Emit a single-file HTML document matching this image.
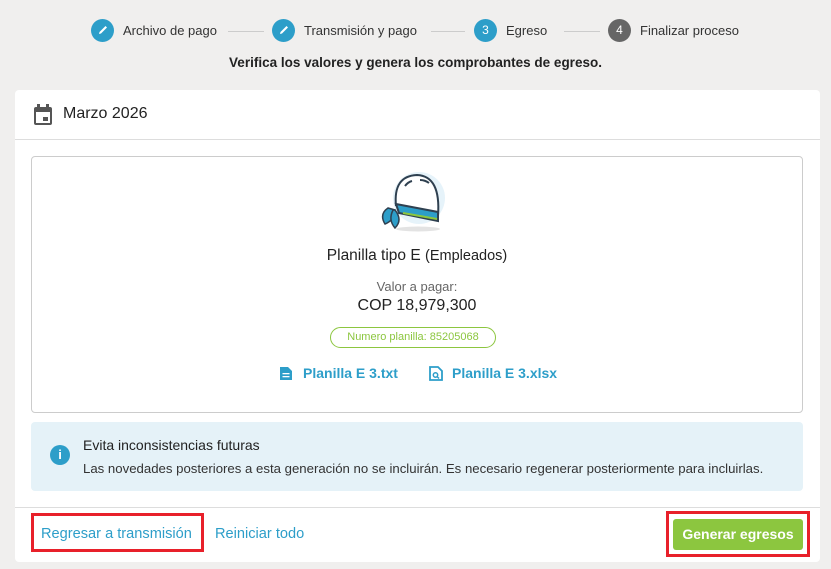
<!DOCTYPE html>
<html><head><meta charset="utf-8"><style>
*{box-sizing:border-box;margin:0;padding:0}
body{width:831px;height:569px;background:#f0efee;font-family:"Liberation Sans",sans-serif;position:relative;overflow:hidden;color:#222}
.a{position:absolute}
.step{position:absolute;top:19px;height:22px;display:flex;align-items:center;font-size:13px;color:#333;white-space:nowrap}
.c{width:23px;height:23px;border-radius:50%;color:#fff;font-size:12px;display:flex;align-items:center;justify-content:center;margin-right:9px}
.line{position:absolute;top:31px;height:1px;background:#ccc}
</style></head><body>
<div class="step" style="left:91px"><div class="c" style="background:#2d9ec9"><svg width="12" height="12" viewBox="0 0 12 12"><path d="M2 10 L2.5 8 L8.5 2 L10 3.5 L4 9.5 Z" fill="#fff"/></svg></div>Archivo de pago</div>
<div class="line" style="left:228px;width:36px"></div>
<div class="step" style="left:272px"><div class="c" style="background:#2d9ec9"><svg width="12" height="12" viewBox="0 0 12 12"><path d="M2 10 L2.5 8 L8.5 2 L10 3.5 L4 9.5 Z" fill="#fff"/></svg></div>Transmisión y pago</div>
<div class="line" style="left:431px;width:34px"></div>
<div class="step" style="left:474px"><div class="c" style="background:#2d9ec9">3</div>Egreso</div>
<div class="line" style="left:564px;width:36px"></div>
<div class="step" style="left:608px"><div class="c" style="background:#666">4</div>Finalizar proceso</div>
<div class="a" style="left:0;width:831px;top:55px;text-align:center;font-size:13.5px;font-weight:bold;color:#222">Verifica los valores y genera los comprobantes de egreso.</div>

<div class="a" style="left:15px;top:90px;width:805px;height:472px;background:#fff;border-radius:4px"></div>
<svg class="a" style="left:33px;top:104px" width="20" height="22" viewBox="0 0 20 22"><rect x="1" y="3" width="18" height="18" rx="2" fill="#555"/><rect x="3" y="8" width="14" height="11" fill="#fff"/><rect x="4" y="0" width="3" height="5" fill="#555"/><rect x="13" y="0" width="3" height="5" fill="#555"/><rect x="10" y="13" width="5" height="4" fill="#555"/></svg>
<div class="a" style="left:63px;top:105px;font-size:16px;color:#222">Marzo 2026</div>
<div class="a" style="left:15px;top:139px;width:805px;height:1px;background:#ddd"></div>

<div class="a" style="left:31px;top:156px;width:772px;height:257px;border:1px solid #ccc;border-radius:4px"></div>
<svg class="a" style="left:375px;top:170px" width="82" height="66" viewBox="0 0 82 66">
<ellipse cx="44" cy="28" rx="26" ry="26" fill="#e6f3fa"/>
<ellipse cx="43" cy="59" rx="22" ry="2.5" fill="#e3e3e3"/>
<path d="M21 36 Q18 6 42 5 Q66 6 63 46" fill="#fff" stroke="#2f4050" stroke-width="2"/>
<path d="M21 34 L63 42 L63 51 L24 43 Z" fill="#2d9ec9" stroke="#2f4050" stroke-width="2"/>
<path d="M28 43 L62 49" stroke="#8cc63f" stroke-width="2"/>
<path d="M13 38 Q4 44 10 54 Q20 50 20 40 Z" fill="#2d9ec9" stroke="#2f4050" stroke-width="1.5"/>
<path d="M20 40 Q28 50 20 58 Q13 50 18 40 Z" fill="#2d9ec9" stroke="#2f4050" stroke-width="1.5"/>
<path d="M30 16 Q33 12 37 11" stroke="#2f4050" stroke-width="2" fill="none"/>
<path d="M45 10 Q50 10 54 13" stroke="#2f4050" stroke-width="2" fill="none"/>
</svg>
<div class="a" style="left:0;width:834px;top:247px;text-align:center;font-size:15.5px;color:#222">Planilla tipo E <span style="font-size:14.5px">(Empleados)</span></div>
<div class="a" style="left:0;width:834px;top:279px;text-align:center;font-size:13px;color:#666">Valor a pagar:</div>
<div class="a" style="left:0;width:834px;top:297px;text-align:center;font-size:16px;color:#222">COP 18,979,300</div>
<div class="a" style="left:330px;top:327px;width:166px;height:21px;border:1.5px solid #8cc63f;border-radius:11px;text-align:center;font-size:11px;line-height:18px;color:#8cc63f">Numero planilla: 85205068</div>
<svg class="a" style="left:279px;top:366px" width="14" height="15" viewBox="0 0 14 15"><path d="M1 1 H9 L13 5 V14 H1 Z" fill="#2d9ec9"/><rect x="3.5" y="7" width="7" height="1.3" fill="#fff"/><rect x="3.5" y="10" width="7" height="1.3" fill="#fff"/></svg>
<div class="a" style="left:303px;top:365px;font-size:14px;font-weight:bold;color:#2d9ec9">Planilla E 3.txt</div>
<svg class="a" style="left:429px;top:366px" width="14" height="15" viewBox="0 0 14 15"><path d="M1 1 H9 L13 5 V14 H1 Z" fill="none" stroke="#2d9ec9" stroke-width="1.8"/><circle cx="6.5" cy="9" r="2.2" fill="none" stroke="#2d9ec9" stroke-width="1.5"/><path d="M8 10.5 L10 12.5" stroke="#2d9ec9" stroke-width="1.5"/></svg>
<div class="a" style="left:452px;top:365px;font-size:14px;font-weight:bold;color:#2d9ec9">Planilla E 3.xlsx</div>

<div class="a" style="left:31px;top:422px;width:772px;height:69px;background:#e5f2f8;border-radius:4px"></div>
<div class="a" style="left:50px;top:445px;width:20px;height:20px;border-radius:50%;background:#2d9ec9;color:#fff;font-size:13px;font-weight:bold;text-align:center;line-height:20px">i</div>
<div class="a" style="left:83px;top:437px;font-size:14px;color:#222">Evita inconsistencias futuras</div>
<div class="a" style="left:83px;top:461px;font-size:13.2px;color:#333">Las novedades posteriores a esta generación no se incluirán. Es necesario regenerar posteriormente para incluirlas.</div>

<div class="a" style="left:15px;top:507px;width:805px;height:1px;background:#ddd"></div>
<div class="a" style="left:31px;top:513px;width:173px;height:39px;border:3px solid #e8202a"></div>
<div class="a" style="left:41px;top:526px;font-size:14.6px;color:#2d9ec9">Regresar a transmisión</div>
<div class="a" style="left:215px;top:526px;font-size:14.6px;color:#2d9ec9">Reiniciar todo</div>
<div class="a" style="left:666px;top:511px;width:144px;height:46px;border:3px solid #e8202a"></div>
<div class="a" style="left:673px;top:519px;width:130px;height:31px;background:#8cc63f;border-radius:3px;color:#fff;font-size:14px;font-weight:bold;text-align:center;line-height:31px">Generar egresos</div>
</body></html>
